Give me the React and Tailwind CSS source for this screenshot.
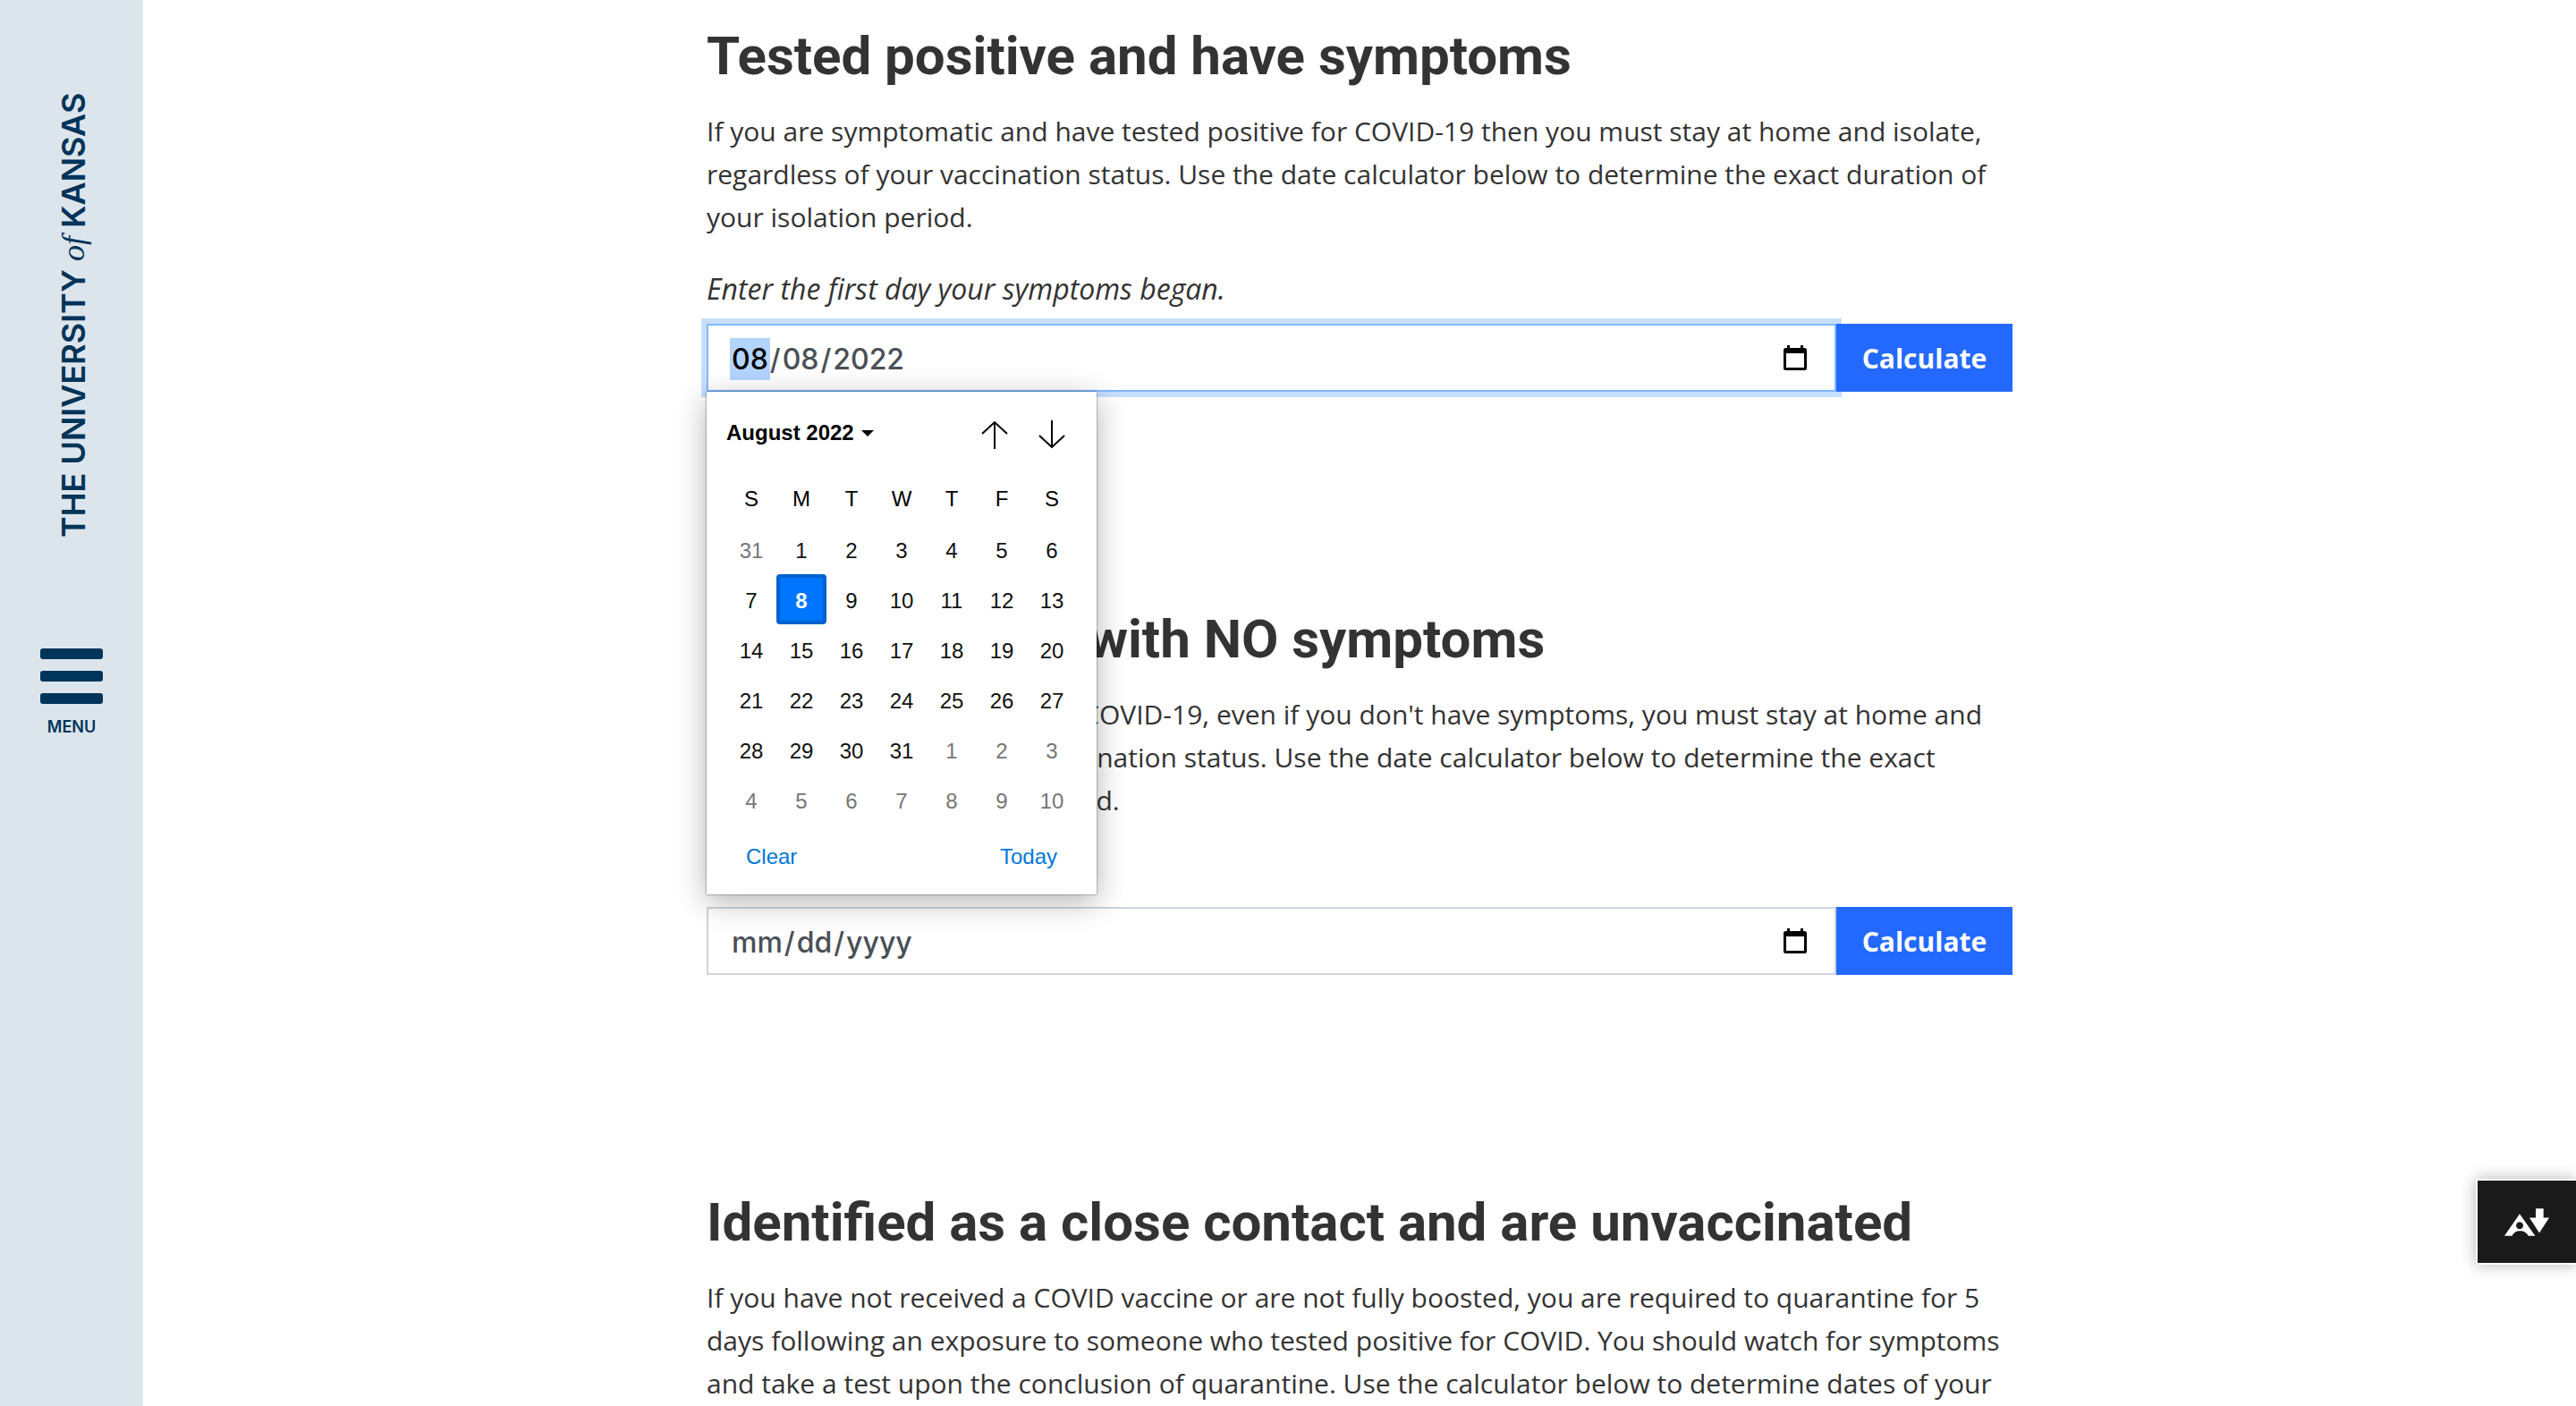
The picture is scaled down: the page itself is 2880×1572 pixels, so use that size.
const DAYS = [
  [31, 1, 2, 3, 4, 5, 6],
  [7, 8, 9, 10, 11, 12, 13],
  [14, 15, 16, 17, 18, 19, 20],
  [21, 22, 23, 24, 25, 26, 27],
  [28, 29, 30, 31, 1, 2, 3],
  [4, 5, 6, 7, 8, 9, 10],
];

const isOtherMonth = (week, day) => (week === 0 && day > 7) || (week >= 4 && day < 15);

function Sidebar() {
  return (
    <aside className="flex w-40 shrink-0 flex-col items-center bg-[#dde5ec] pt-[100px] text-[#003459]">
      <a
        href="#home"
        className="ml-1 flex h-[504px] rotate-180 items-center justify-center whitespace-nowrap font-['Inter',sans-serif] text-[36px] leading-[44px] font-semibold [writing-mode:vertical-rl]"
      >
        <span>
          THE UNIVERSITY{" "}
          <span className="font-['Liberation_Serif',serif] font-normal italic">of</span> KANSAS
        </span>
      </a>
      <button type="button" className="mt-[121px] flex flex-col items-center">
        <span className="flex flex-col gap-[13px]">
          <span className="h-3 w-[70px] rounded-[3px] bg-[#003459]" />
          <span className="h-3 w-[70px] rounded-[3px] bg-[#003459]" />
          <span className="h-3 w-[70px] rounded-[3px] bg-[#003459]" />
        </span>
        <span className="mt-3.5 font-['Inter',sans-serif] text-[18px] leading-6 font-semibold">MENU</span>
      </button>
    </aside>
  );
}

function CalendarIcon() {
  return (
    <svg viewBox="0 0 26 28" className="h-7 w-[26px]" aria-hidden="true">
      <path d="M4 0h3v3h12V0h3v3h1.500a2.500 2.500 0 0 1 2.500 2.500v20a2.500 2.500 0 0 1-2.500 2.500h-21A2.500 2.500 0 0 1 0 25.500v-20A2.500 2.500 0 0 1 2.500 3H4zM3 9v16h20V9z" fill="#000" fillRule="evenodd" />
    </svg>
  );
}

function DatePopup() {
  return (
    <div className="absolute top-full left-0 z-20 w-[436px] bg-white font-['Liberation_Sans',sans-serif] text-[24px] leading-7 text-black shadow-[0_0_2px_rgba(0,0,0,0.6),0_8px_32px_rgba(0,0,0,0.3)]">
      <div className="flex h-[92px] items-center justify-between pr-[34px] pl-[22px]">
        <button type="button" className="flex items-center gap-2 font-bold">
          August 2022
          <svg viewBox="0 0 14 7" className="h-[7px] w-3.5" aria-hidden="true">
            <path d="M0 0h14L7 7z" />
          </svg>
        </button>
        <div className="flex gap-8 pt-1">
          <button type="button" aria-label="Previous month">
            <svg viewBox="0 0 32 32" className="size-8" fill="none" stroke="#000" strokeWidth="2" aria-hidden="true">
              <path d="M16 32V2M2 15 16 2l14 13" />
            </svg>
          </button>
          <button type="button" aria-label="Next month">
            <svg viewBox="0 0 32 32" className="size-8" fill="none" stroke="#000" strokeWidth="2" aria-hidden="true">
              <path d="M16 0v30M2 17l14 13 14-13" />
            </svg>
          </button>
        </div>
      </div>
      <table className="ml-[22px] border-collapse text-center">
        <thead>
          <tr>
            {["S", "M", "T", "W", "T", "F", "S"].map((d, i) => (
              <th key={i} scope="col" className="size-14 p-0 font-normal">{d}</th>
            ))}
          </tr>
        </thead>
        <tbody>
          {DAYS.map((week, w) => (
            <tr key={w}>
              {week.map((day) => {
                const selected = w === 1 && day === 8;
                const tone = selected
                  ? "block size-14 rounded-[4px] border-4 border-[#0062d0] bg-[#0075ff] pt-1 font-bold text-white"
                  : isOtherMonth(w, day)
                    ? "block size-14 pt-1 text-[#767676]"
                    : "block size-14 pt-1 text-[#101010]";
                return (
                  <td key={day} className="size-14 p-0">
                    <button type="button" className={tone}>{day}</button>
                  </td>
                );
              })}
            </tr>
          ))}
        </tbody>
      </table>
      <div className="flex h-[78px] items-start justify-between px-11 pt-[22px] text-[#0078d4]">
        <button type="button">Clear</button>
        <button type="button">Today</button>
      </div>
    </div>
  );
}

function DateForm({ id, label, value, open }) {
  const base =
    "block h-[76px] w-full appearance-none border-2 bg-white pt-1 pl-6 font-['Inter',sans-serif] text-[32px] leading-[48px] font-medium text-[#495057] outline-none [&::-webkit-calendar-picker-indicator]:opacity-0 [&::-webkit-datetime-edit-day-field]:px-0.5 [&::-webkit-datetime-edit-month-field]:px-0.5 [&::-webkit-datetime-edit-year-field]:px-0.5";
  return (
    <form onSubmit={(e) => e.preventDefault()}>
      <label htmlFor={id} className="mb-[15px] block text-[32px] italic">{label}</label>
      <div className="relative flex">
        <div className="relative min-w-0 flex-1">
          <input
            id={id}
            type="date"
            defaultValue={value}
            className={
              open
                ? `${base} border-[#80b9ff] shadow-[0_0_0_6px_#c8deff] [&::-webkit-datetime-edit-month-field]:bg-[#b3d4ff] [&::-webkit-datetime-edit-month-field]:py-1 [&::-webkit-datetime-edit-month-field]:text-black`
                : `${base} border-[#ced4da]`
            }
          />
          <span className="pointer-events-none absolute inset-y-0 right-[33px] flex items-center">
            <CalendarIcon />
          </span>
        </div>
        <button type="submit" className="relative w-[197px] bg-[#2469ff] pt-0.5 text-center font-bold text-white">
          Calculate
        </button>
        {open && <DatePopup />}
      </div>
    </form>
  );
}

function Section({ title, children }) {
  return (
    <section className="pb-[241px]">
      <h2 className="mb-6 font-['Roboto',sans-serif] text-[60px] leading-[72px] font-bold">{title}</h2>
      {children}
    </section>
  );
}

export default function App() {
  return (
    <div className="flex h-screen overflow-hidden bg-white font-['Open_Sans',sans-serif] text-[30px] leading-[48px] text-[#333333]">
      <Sidebar />
      <main className="min-w-0 flex-1 pt-[27px]">
        <div className="mx-auto max-w-[1460px]">
          <Section title="Tested positive and have symptoms">
            <p className="mb-8">
              If you are symptomatic and have tested positive for COVID-19 then you must stay at home and isolate,
              regardless of your vaccination status. Use the date calculator below to determine the exact duration of
              your isolation period.
            </p>
            <DateForm id="symptoms-date" label="Enter the first day your symptoms began." value="2022-08-08" open />
          </Section>
          <Section title="Tested positive with NO symptoms">
            <p className="mb-8">
              If you have tested positive for COVID-19, even if you don't have symptoms, you must stay at home and
              <br />
              isolate, regardless of your vaccination status. Use the date calculator below to determine the exact
              <br />
              duration of your isolation period.
            </p>
            <DateForm id="test-date" label="Enter the day you were tested." />
          </Section>
          <Section title="Identified as a close contact and are unvaccinated">
            <p>
              If you have not received a COVID vaccine or are not fully boosted, you are required to quarantine for 5
              <br />
              days following an exposure to someone who tested positive for COVID. You should watch for symptoms
              <br />
              and take a test upon the conclusion of quarantine. Use the calculator below to determine dates of your
            </p>
          </Section>
        </div>
      </main>
      <button
        type="button"
        aria-label="Download alternative formats"
        className="fixed right-0 bottom-[158px] flex h-24 w-28 items-center border-2 border-r-0 border-white bg-[#1a1a1a] pl-[30px] shadow-[0_0_16px_rgba(0,0,0,0.3)]"
      >
        <svg viewBox="180 180 150 92" className="h-[31px] w-[50px]" fill="#fff" aria-hidden="true">
          <path fillRule="evenodd" d="M231 198L283 272H260C250 250 214 250 206 272H180ZM231 225a12 12 0 1 0 .1 0Z" />
          <path d="M285 180h26v31h19L297 262 264 211h21z" />
        </svg>
      </button>
    </div>
  );
}
